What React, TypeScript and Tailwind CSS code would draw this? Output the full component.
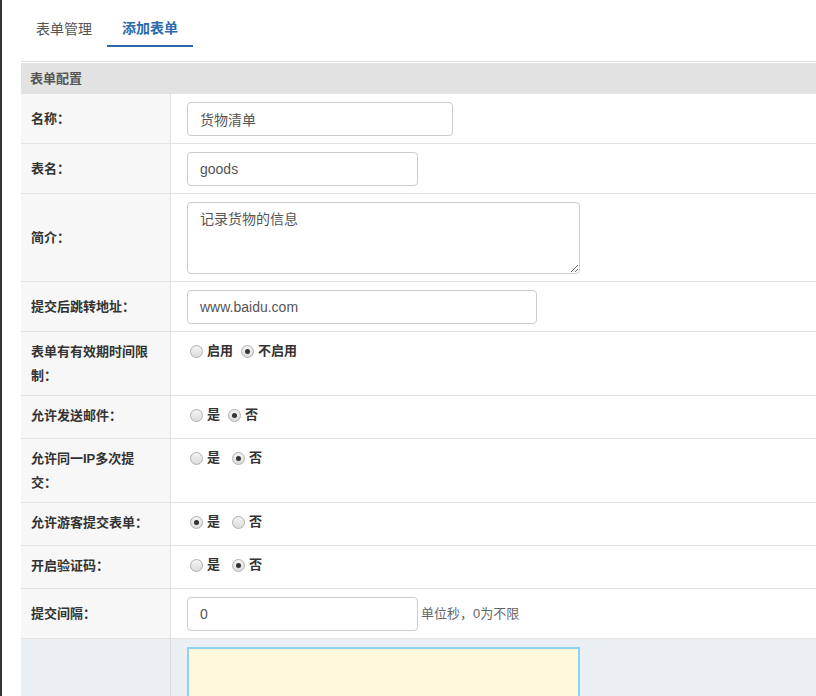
const font = { fontFamily: '"Liberation Sans", "Noto Sans CJK SC", sans-serif' };

function Radio({ checked, label }: { checked?: boolean; label: string }) {
  return (
    <label className="flex items-center gap-[4px] mr-[8px]">
      <span className="flex h-[13px] w-[13px] items-center justify-center rounded-full border border-[#b0b0b0] bg-gradient-to-b from-[#f4f4f4] to-[#dcdcdc]">
        {checked && <span className="h-[5px] w-[5px] rounded-full bg-[#333]" />}
      </span>
      <span className="font-bold text-[13px] text-[#333]">{label}</span>
    </label>
  );
}

function Row({ label, children }: { label: string; children: React.ReactNode }) {
  return (
    <div className="flex border-b border-[#e3e3e3]">
      <div className="w-[150px] shrink-0 bg-[#f7f7f7] border-r border-[#e3e3e3] pl-[10px] pr-[15px] py-2 text-[13px] font-bold leading-[24px] text-[#333] flex items-center">
        <span>{label}</span>
      </div>
      <div className="flex-1 pl-[16px] pt-2 pb-[7px]">{children}</div>
    </div>
  );
}

function TopRow({ label, children }: { label: string; children: React.ReactNode }) {
  return (
    <div className="flex border-b border-[#e3e3e3]">
      <div className="w-[150px] shrink-0 bg-[#f7f7f7] border-r border-[#e3e3e3] pl-[10px] pr-[15px] pt-2 pb-[7px] text-[13px] font-bold leading-[24px] text-[#333]">
        {label}
      </div>
      <div className="flex-1 pl-[19px] pt-2 pb-3">
        <div className="flex h-[22px] items-center">{children}</div>
      </div>
    </div>
  );
}

function Input({ value, w }: { value: string; w: string }) {
  return (
    <input
      readOnly
      value={value}
      className={`${w} h-[34px] rounded-[4px] border border-[#ccc] px-3 text-[14px] text-[#555] outline-none`}
      style={font}
    />
  );
}

export default function App() {
  return (
    <div className="flex min-h-[696px] bg-white" style={font}>
      <div className="w-[2px] shrink-0 bg-[#333]" />
      <div className="flex-1 pl-[19px]">
        <div className="flex pt-[12px]">
          <div className="h-[35px] px-[15px] flex items-center text-[14px] text-[#555]">表单管理</div>
          <div className="h-[35px] px-[15px] flex items-center text-[14px] font-bold text-[#2a6aab] border-b-2 border-[#2a6aab]">
            添加表单
          </div>
        </div>
        <div className="mt-[14px] border-t border-[#dcdcdc] pt-px">
          <div className="h-[31px] bg-[#e2e2e2] pl-[9px] flex items-center text-[13px] font-bold text-[#555]">
            表单配置
          </div>
        </div>
        <Row label="名称：">
          <Input value="货物清单" w="w-[266px]" />
        </Row>
        <Row label="表名：">
          <Input value="goods" w="w-[231px]" />
        </Row>
        <Row label="简介：">
          <textarea
            readOnly
            value="记录货物的信息"
            className="block w-[393px] h-[72px] rounded-[4px] border border-[#ccc] px-3 py-[6px] text-[14px] text-[#555] outline-none"
            style={font}
          />
        </Row>
        <Row label="提交后跳转地址：">
          <Input value="www.baidu.com" w="w-[350px]" />
        </Row>
        <TopRow label="表单有有效期时间限制：">
          <Radio label="启用" />
          <Radio checked label="不启用" />
        </TopRow>
        <TopRow label="允许发送邮件：">
          <Radio label="是" />
          <Radio checked label="否" />
        </TopRow>
        <TopRow label="允许同一IP多次提交：">
          <Radio label="是" />
          <span className="w-[4px]" />
          <Radio checked label="否" />
        </TopRow>
        <TopRow label="允许游客提交表单：">
          <Radio checked label="是" />
          <span className="w-[4px]" />
          <Radio label="否" />
        </TopRow>
        <TopRow label="开启验证码：">
          <Radio label="是" />
          <span className="w-[4px]" />
          <Radio checked label="否" />
        </TopRow>
        <Row label="提交间隔：">
          <div className="flex items-center">
            <Input value="0" w="w-[231px]" />
            <span className="ml-[3px] text-[13px] text-[#666]">单位秒，0为不限</span>
          </div>
        </Row>
        <div className="flex h-[80px] bg-[#eaeff3]">
          <div className="w-[150px] shrink-0 border-r border-[#dcdcdc]" />
          <div className="flex-1 pl-[16px] pt-2">
            <div className="w-[393px] h-[80px] border-2 border-[#8fd3ef] bg-[#fef9dc]" />
          </div>
        </div>
      </div>
    </div>
  );
}
